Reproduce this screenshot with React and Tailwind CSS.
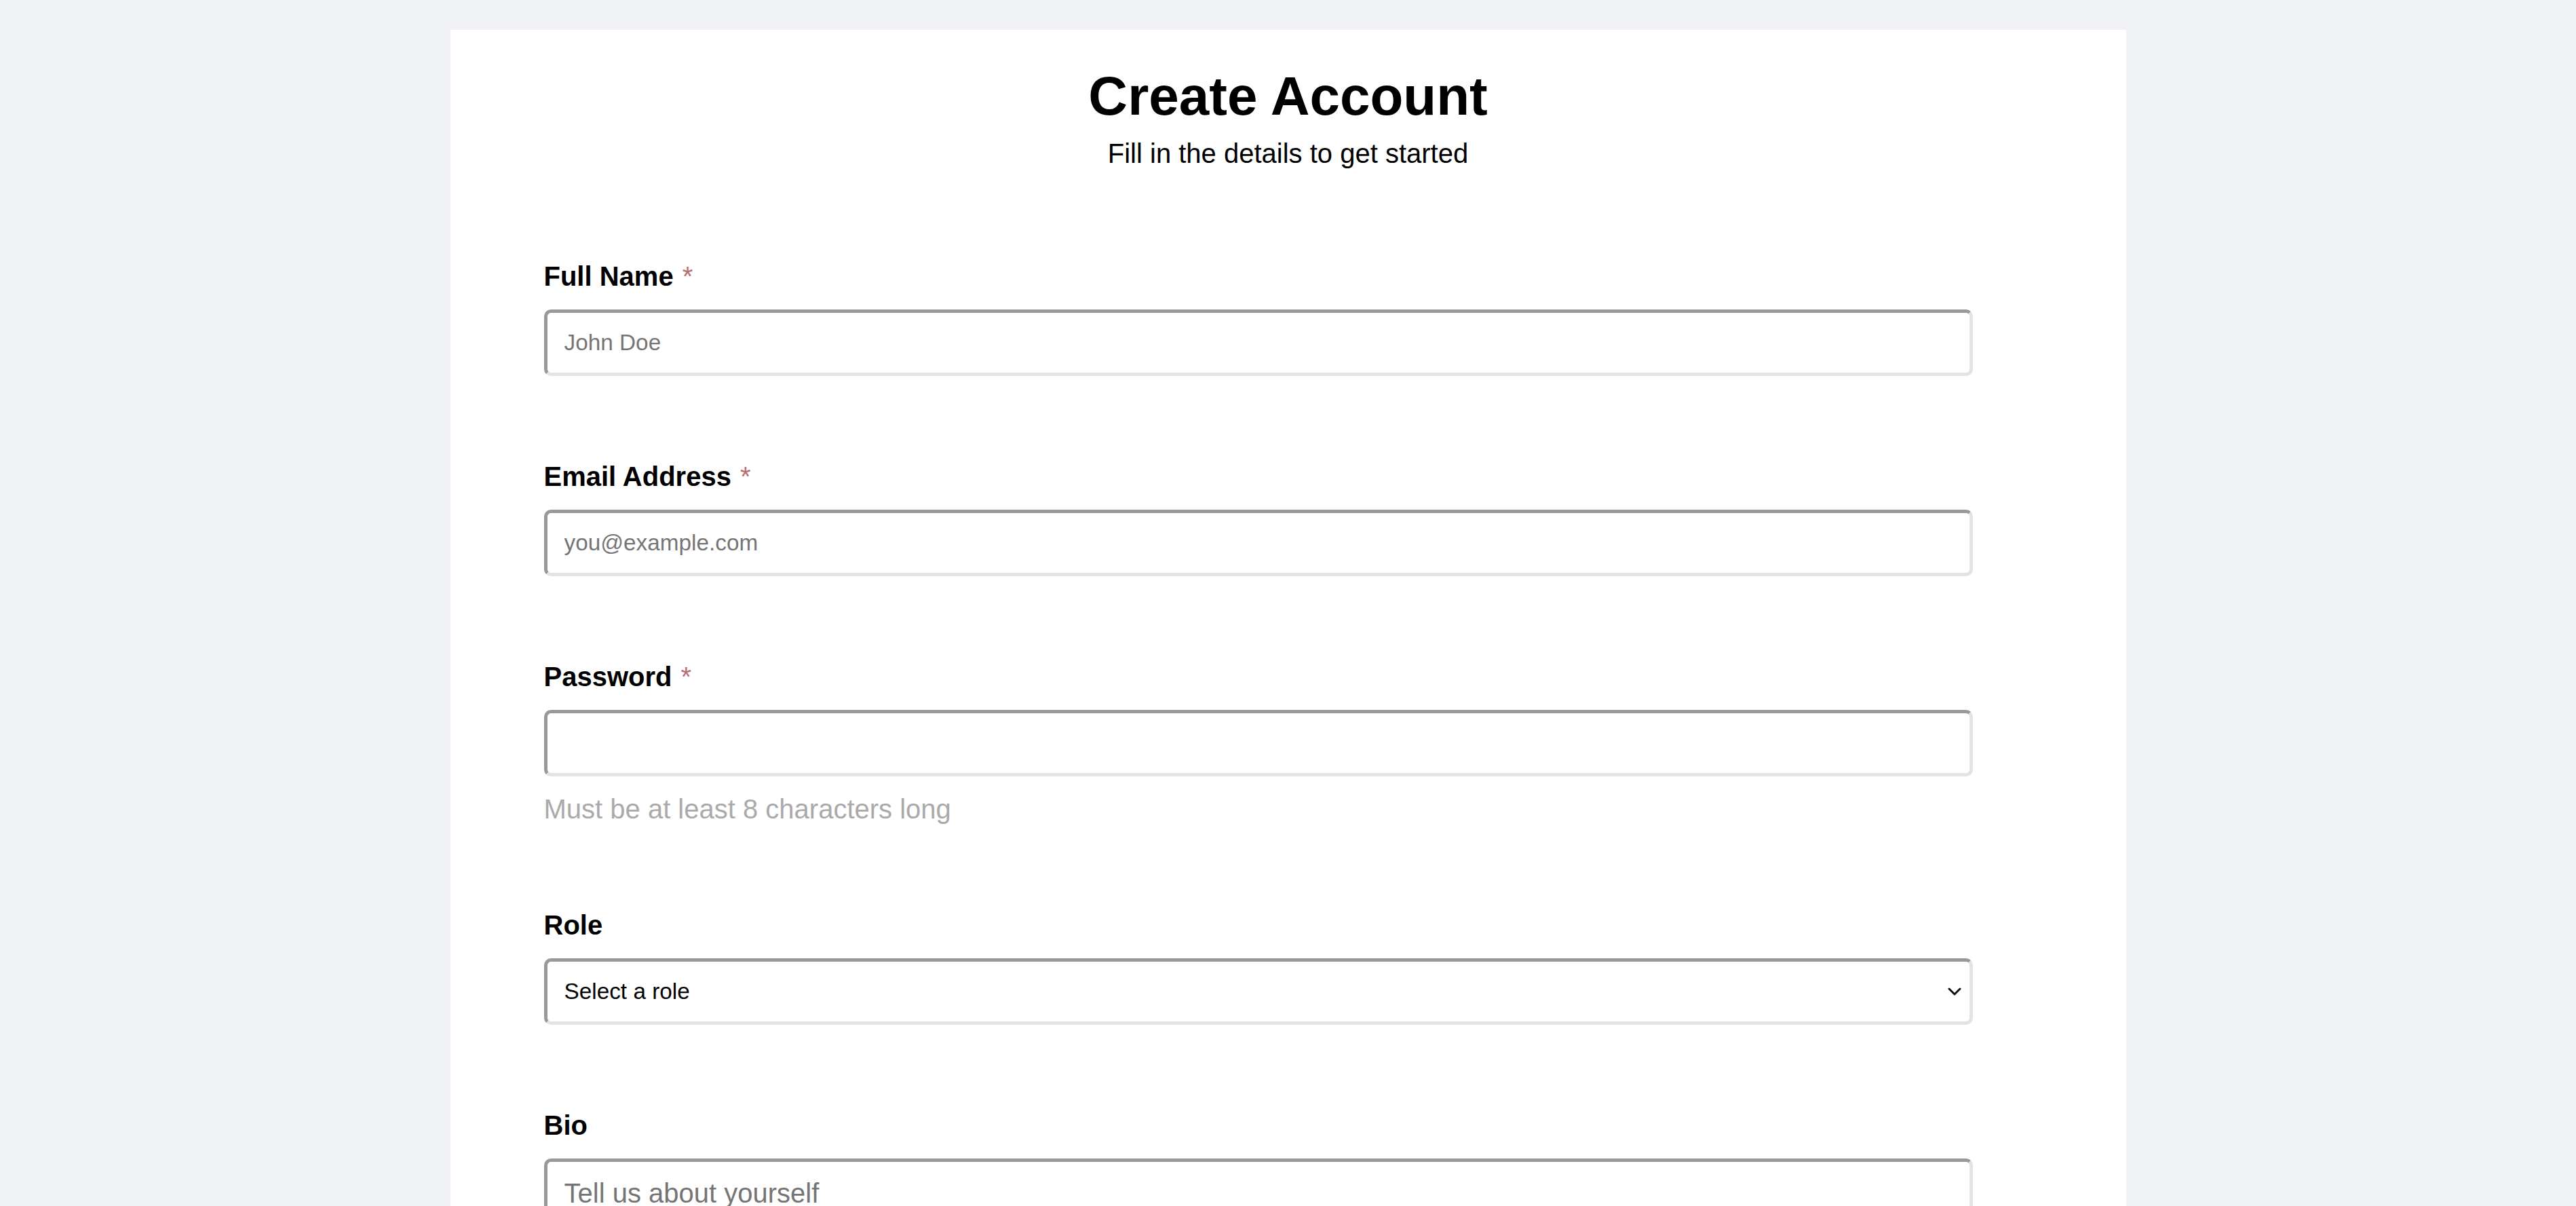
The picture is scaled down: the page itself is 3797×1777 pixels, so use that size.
import { useState } from "react";

const fieldBorder =
  "border-[5px] border-t-[#999999] border-l-[#999999] border-r-[#e3e3e3] border-b-[#e3e3e3] rounded-[10px] bg-white outline-none";

function Label({ text, required }) {
  return (
    <label className="block text-[40px] leading-[46px] font-bold text-black">
      {text}
      {required && <span className="ml-[13px] font-normal text-[#b5706f]">*</span>}
    </label>
  );
}

function ChevronDown() {
  return (
    <svg width="20" height="12" viewBox="0 0 20 12" fill="none">
      <path d="M2 2 L10 10 L18 2" stroke="#111" strokeWidth="3" strokeLinecap="round" strokeLinejoin="round" />
    </svg>
  );
}

export default function App() {
  const [form, setForm] = useState({ name: "", email: "", password: "", role: "", bio: "" });
  const update = (key) => (e) => setForm({ ...form, [key]: e.target.value });

  return (
    <div className="min-h-screen bg-[#f0f1f5] pt-[44px] font-['Liberation_Sans',Arial,sans-serif]">
      <div className="mx-auto w-[2470px] bg-white px-[138px] pt-[52px] pb-[120px]">
        <h1 className="text-center text-[80px] leading-[92px] font-bold text-black">Create Account</h1>
        <p className="mt-[15px] text-center text-[40px] leading-[46px] text-black">Fill in the details to get started</p>

        <form className="mt-[135px]" onSubmit={(e) => e.preventDefault()}>
          <div className="mb-[125px]">
            <Label text="Full Name" required />
            <input
              type="text"
              value={form.name}
              onChange={update("name")}
              placeholder="John Doe"
              className={`mt-[26px] block h-[98px] w-[96%] px-[25px] text-[33.33px] text-black placeholder:text-[#757575] ${fieldBorder}`}
            />
          </div>

          <div className="mb-[125px]">
            <Label text="Email Address" required />
            <input
              type="email"
              value={form.email}
              onChange={update("email")}
              placeholder="you@example.com"
              className={`mt-[26px] block h-[98px] w-[96%] px-[25px] text-[33.33px] text-black placeholder:text-[#757575] ${fieldBorder}`}
            />
          </div>

          <div className="mb-[125px]">
            <Label text="Password" required />
            <input
              type="password"
              value={form.password}
              onChange={update("password")}
              className={`mt-[26px] block h-[98px] w-[96%] px-[25px] text-[33.33px] text-black ${fieldBorder}`}
            />
            <p className="mt-[25px] text-[40px] leading-[46px] text-[#aaaaaa]">Must be at least 8 characters long</p>
          </div>

          <div className="mb-[125px]">
            <Label text="Role" />
            <div className="relative mt-[26px] w-[96%]">
              <select
                value={form.role}
                onChange={update("role")}
                className={`block h-[98px] w-full appearance-none px-[25px] text-[33.33px] text-black ${fieldBorder}`}
              >
                <option value="">Select a role</option>
                <option value="developer">Developer</option>
                <option value="designer">Designer</option>
                <option value="manager">Manager</option>
              </select>
              <span className="pointer-events-none absolute right-[17px] top-1/2 flex -translate-y-1/2 items-center">
                <ChevronDown />
              </span>
            </div>
          </div>

          <div>
            <Label text="Bio" />
            <textarea
              value={form.bio}
              onChange={update("bio")}
              placeholder="Tell us about yourself"
              className={`mt-[26px] block h-[320px] w-[96%] resize-none px-[25px] py-[23px] text-[40px] leading-[46px] text-black placeholder:text-[#757575] ${fieldBorder}`}
            />
          </div>
        </form>
      </div>
    </div>
  );
}
